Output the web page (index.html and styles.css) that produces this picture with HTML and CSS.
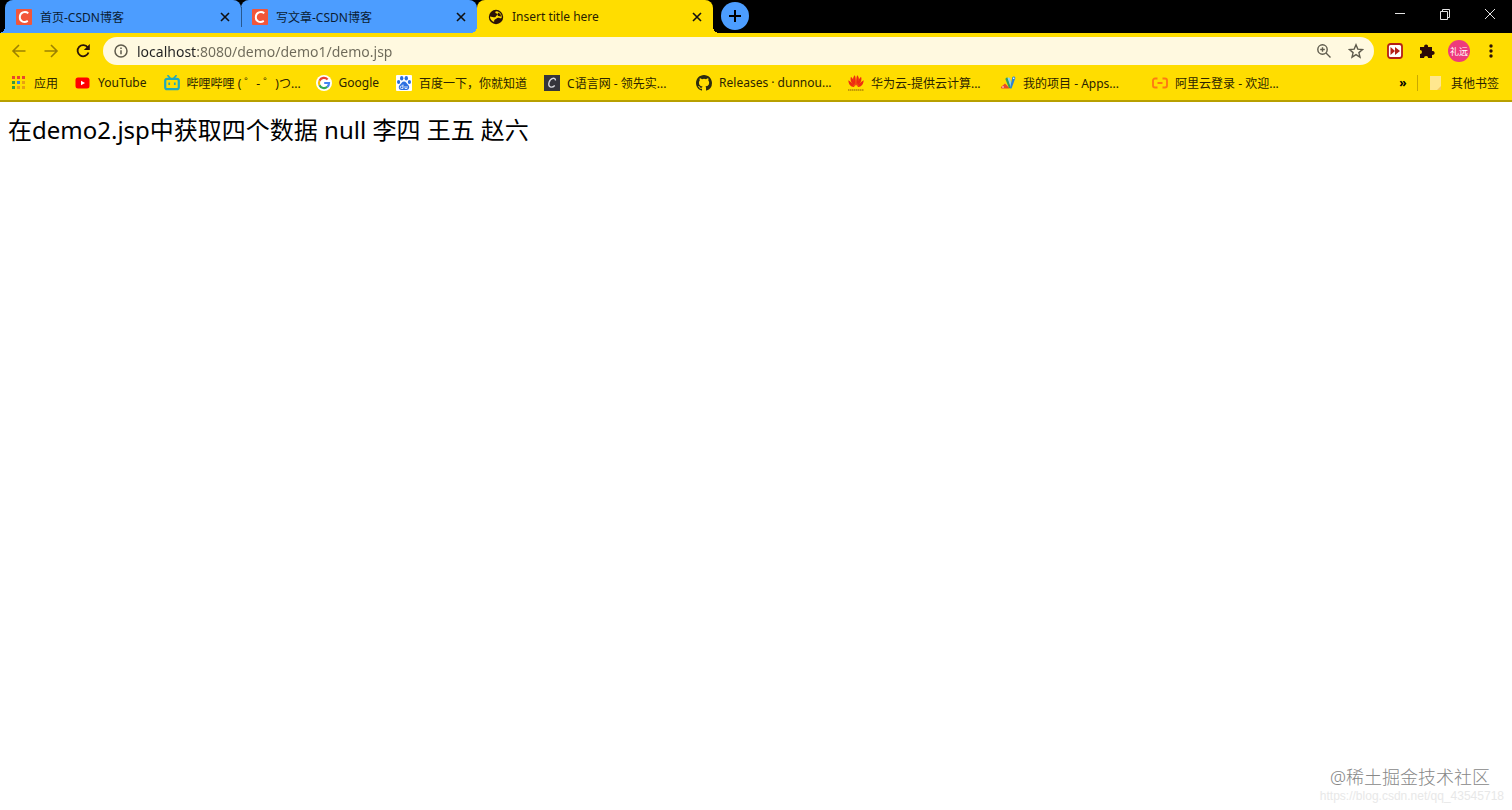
FILE: index.html
```html
<!DOCTYPE html>
<html lang="zh-CN">
<head>
  <meta charset="UTF-8">
  <meta name="viewport" content="width=device-width, initial-scale=1.0">
  <title>Insert title here</title>
  <link rel="stylesheet" href="styles.css">
</head>
<body>
  <header class="browser">
    <div class="tab-strip">
      <div class="tab tab-first">
        <svg class="icon" viewBox="0 0 16 16"><rect width="16" height="16" rx="1" fill="#f2563a"/><path d="M12.300 4.300C9 1.800 4 3.400 3.800 8c-.2 4.800 4.600 6 8 3.900" fill="none" stroke="#fff" stroke-width="1.900"/></svg>
        <span class="tab-title">首页-CSDN博客</span>
        <button class="tab-close" aria-label="关闭"><svg viewBox="0 0 10 10"><path d="M1 1l8 8M9 1L1 9"/></svg></button>
      </div>
      <div class="tab tab-second">
        <svg class="icon" viewBox="0 0 16 16"><rect width="16" height="16" rx="1" fill="#f2563a"/><path d="M12.300 4.300C9 1.800 4 3.400 3.800 8c-.2 4.800 4.600 6 8 3.900" fill="none" stroke="#fff" stroke-width="1.900"/></svg>
        <span class="tab-title">写文章-CSDN博客</span>
        <button class="tab-close" aria-label="关闭"><svg viewBox="0 0 10 10"><path d="M1 1l8 8M9 1L1 9"/></svg></button>
      </div>
      <div class="tab active">
        <svg class="icon" viewBox="0 0 16 16"><circle cx="8" cy="8" r="7.200" fill="#2b1208"/><path d="M8.500 2.300c-2.200.3-1 2.200.4 2.300 1.200 0 1.200 1.300.1 1.700-1.400.5-.7 1.700-1.900 1.900-1.400.2-3.300-.6-5.200-.7.2 2.800 2 4.700 4.200 5.500.1-1.300-.1-2 .8-2.500 1.500-.7 1.900-1.600 3.200-1.800 1.500-.2 1.800 1 3.500.2.600-3-1.500-6.300-5.100-6.600z" fill="#fd0"/><path d="M10 3.500c2 .6 3 2.300 3 4-1 .3-1.800-.8-3.200-.4z" fill="#2b1208"/></svg>
        <span class="tab-title">Insert title here</span>
        <button class="tab-close" aria-label="关闭"><svg viewBox="0 0 10 10"><path d="M1 1l8 8M9 1L1 9"/></svg></button>
      </div>
      <button class="new-tab" aria-label="新标签页"><svg viewBox="0 0 14 14"><path d="M7 1v12M1 7h12"/></svg></button>
      <div class="window-buttons">
        <button aria-label="最小化"><svg viewBox="0 0 12 12"><path d="M1 5.500h10"/></svg></button>
        <button aria-label="还原"><svg viewBox="0 0 12 12"><path d="M1.500 3.500h7v8h-7zM3.500 3.500v-2h7v8h-2"/></svg></button>
        <button aria-label="关闭窗口"><svg viewBox="0 0 12 12"><path d="M1 1l10 10M11 1L1 11"/></svg></button>
      </div>
    </div>

    <div class="toolbar">
      <button class="nav-button faded" aria-label="后退"><svg viewBox="0 0 16 16"><path d="M14.500 8H2M8 2L2 8l6 6"/></svg></button>
      <button class="nav-button faded" aria-label="前进"><svg viewBox="0 0 16 16"><path d="M1.500 8H14M8 2l6 6-6 6"/></svg></button>
      <button class="nav-button reload" aria-label="重新加载"><svg viewBox="0 0 16 16"><path d="M12.800 4.500A5.600 5.600 0 1 0 13.500 9.500"/><path class="fill" d="M14.800 1v6h-6z"/></svg></button>
      <div class="address">
        <svg class="page-info" viewBox="0 0 14 14"><circle cx="7" cy="7" r="6"/><path d="M7 6.200v4M7 3.500v1.500"/></svg>
        <input class="url" type="text" aria-label="地址栏" value="localhost:8080/demo/demo1/demo.jsp">
        <button class="address-button" aria-label="缩放"><svg viewBox="0 0 16 16"><circle cx="6.500" cy="6.500" r="4.700"/><path d="M10 10l4.500 4.500M4.200 6.500h4.600M6.500 4.200v4.600"/></svg></button>
        <button class="address-button" aria-label="收藏"><svg viewBox="0 0 16 16"><path d="M8 1.800l1.800 4.300 4.700.4-3.600 3.100 1.100 4.600L8 11.700l-4 2.500 1.100-4.600-3.600-3.100 4.700-.4z"/></svg></button>
      </div>
      <div class="extensions">
        <button aria-label="快进扩展"><svg viewBox="0 0 16 16"><rect x="1" y="1" width="14" height="14" rx="2.500" fill="#fff" stroke="#b51f16" stroke-width="1.800"/><path d="M3.500 4L8 8l-4.500 4zM8 4l5 4-5 4z" fill="#b51f16"/></svg></button>
        <button aria-label="扩展程序"><svg viewBox="0 0 16 16"><path d="M1 4h4.200a2 2 0 1 1 3.800 0H13v4a2 2 0 1 1 0 3.800V15H9.200a2.100 2.100 0 0 0-4.200 0H1v-4a2 2 0 0 0 0-4z" fill="#2b0a08"/></svg></button>
        <button class="avatar" aria-label="礼远">礼远</button>
        <button aria-label="菜单"><svg viewBox="0 0 16 16"><g fill="#2b1208"><circle cx="8" cy="3" r="1.700"/><circle cx="8" cy="8" r="1.700"/><circle cx="8" cy="13" r="1.700"/></g></svg></button>
      </div>
    </div>

    <nav class="bookmarks">
      <a class="bookmark" href="#">
        <svg class="icon" viewBox="0 0 16 16"><path d="M1 1h3v3H1zM6 1h3v3H6zM11 1h3v3h-3z" fill="#e8472b"/><path d="M1 6h3v3H1zM1 11h3v3H1z" fill="#3b9a3e"/><path d="M6 6h3v3H6z" fill="#3b86d6"/><path d="M11 6h3v3h-3zM6 11h3v3H6zM11 11h3v3h-3z" fill="#e8a011"/></svg>
        <span>应用</span>
      </a>
      <a class="bookmark" href="#">
        <svg class="icon" viewBox="0 0 16 16"><rect x=".5" y="2.500" width="14" height="11" rx="2.500" fill="#f00"/><path d="M6 5.700v4.600L10 8z" fill="#fff"/></svg>
        <span>YouTube</span>
      </a>
      <a class="bookmark wide" href="#">
        <svg class="icon" viewBox="0 0 16 16"><path d="M4 .7l2 2.300M12 .7L10 3" stroke="#20a9bd" stroke-width="1.700" stroke-linecap="round"/><rect x="1.200" y="3.800" width="13.600" height="10.400" rx="2" fill="#fd0" stroke="#20a9bd" stroke-width="2.200"/><path d="M5.200 7.500v2.500M10.800 7.500v2.500" stroke="#20a9bd" stroke-width="1.700"/></svg>
        <span>哔哩哔哩 ( ゜- ゜)つ...</span>
      </a>
      <a class="bookmark" href="#">
        <svg class="icon" viewBox="0 0 16 16"><circle cx="8" cy="8" r="8" fill="#fff"/><g fill="none" stroke-width="2.200"><path d="M11.600 4.400A5 5 0 0 0 3.500 5.700" stroke="#ea4335"/><path d="M3.500 5.700a5 5 0 0 0 0 4.600" stroke="#fbbc05"/><path d="M3.500 10.300a5 5 0 0 0 7.800 1.500" stroke="#34a853"/><path d="M11.300 11.800A5 5 0 0 0 13 8H8.200" stroke="#4285f4"/></g></svg>
        <span>Google</span>
      </a>
      <a class="bookmark" href="#">
        <svg class="icon" viewBox="0 0 16 16"><rect width="16" height="16" rx="1" fill="#fff"/><g fill="#2b6fe0"><ellipse cx="5.700" cy="3.200" rx="1.700" ry="2.200"/><ellipse cx="10.300" cy="3.200" rx="1.700" ry="2.200"/><ellipse cx="2.600" cy="7" rx="1.600" ry="2.100"/><ellipse cx="13.400" cy="7" rx="1.600" ry="2.100"/><path d="M8 6.500c2 0 2.800 2.200 4.300 3.600 1.700 1.700.9 4.900-1.600 4.900H5.300c-2.500 0-3.300-3.200-1.600-4.900C5.200 8.700 6 6.500 8 6.500z"/></g><path d="M7 9.500v4H5.500a1.200 1.200 0 0 1 0-2.500H7M9 11v2.500h2V11" fill="none" stroke="#fff" stroke-width=".8"/></svg>
        <span>百度一下，你就知道</span>
      </a>
      <a class="bookmark wide" href="#">
        <svg class="icon" viewBox="0 0 16 16"><rect width="16" height="16" fill="#35353b"/><path d="M11.500 5.500C11.500 2 6.500 2.500 5 7.500c-1.300 4.800 2.800 6 5.800 3" fill="none" stroke="#d8d8dc" stroke-width="1.300"/></svg>
        <span>C语言网 - 领先实...</span>
      </a>
      <a class="bookmark wide" href="#">
        <svg class="icon" viewBox="0 0 16 16"><path fill="#2b2b10" d="M8 0C3.580 0 0 3.580 0 8c0 3.540 2.290 6.530 5.470 7.590.4.070.55-.17.55-.38v-1.490c-2.010.37-2.530-.49-2.690-.94-.09-.23-.48-.94-.82-1.130-.28-.15-.68-.52-.01-.53.63-.01 1.080.58 1.230.82.72 1.210 1.870.87 2.330.66.07-.52.28-.87.51-1.070-1.780-.2-3.640-.89-3.640-3.950 0-.87.310-1.590.82-2.150-.08-.2-.36-1.020.08-2.120 0 0 .67-.21 2.200.82a7.600 7.600 0 0 1 4 0c1.530-1.040 2.200-.82 2.200-.82.44 1.100.16 1.920.08 2.120.51.56.82 1.270.82 2.150 0 3.070-1.870 3.750-3.650 3.950.29.25.54.73.54 1.480v2.200c0 .21.150.46.55.38A8.010 8.010 0 0 0 16 8c0-4.420-3.580-8-8-8z"/></svg>
        <span>Releases · dunnou...</span>
      </a>
      <a class="bookmark wide" href="#">
        <svg class="icon" viewBox="0 0 16 16"><g fill="#ee2c12"><path d="M7.700 10.800C4.600 7.500 4.200 2 6.900.2 7.900 3 8 7.500 7.700 10.800zM8.300 10.800C11.400 7.500 11.800 2 9.100.2 8.100 3 8 7.500 8.300 10.800z"/><path d="M7 11.200C3.900 9.500 1.500 5 3 1.800 5.500 4 6.800 8 7 11.200zM9 11.200c3.100-1.700 5.500-6.200 4-9.400C10.500 4 9.200 8 9 11.200z"/><path d="M6.500 11.900C3 12.400.2 9 .4 5.200 3.500 7 5.500 9 6.500 11.900zM9.500 11.900c3.500.5 6.300-2.900 6.100-6.700C12.500 7 10.500 9 9.500 11.900z"/></g><path d="M0 15h16" stroke="#8b5a0a" stroke-width="1.200" stroke-dasharray="1.500 .5"/></svg>
        <span>华为云-提供云计算...</span>
      </a>
      <a class="bookmark wide" href="#">
        <svg class="icon" viewBox="0 0 16 16"><path d="M1 12l4-3.500 5 5H1.500A1.200 1.200 0 0 1 1 12z" fill="#e84b29"/><path d="M5.500 4.500a1.500 1.500 0 0 1 2.700-1.200L11 13H9z" fill="#2fa15b"/><path d="M7.500 3a1.500 1.500 0 0 1 2.500.2L11.500 9l-.5 4z" fill="#8fd0ee"/><path d="M12.300 2.500a1.500 1.500 0 0 1 2.900 1L11.500 13.500H10z" fill="#2d82d2"/><circle cx="3" cy="12" r=".8" fill="#fff"/><circle cx="13.700" cy="3.200" r=".8" fill="#fff"/></svg>
        <span>我的项目 - Apps...</span>
      </a>
      <a class="bookmark wide" href="#">
        <svg class="icon" viewBox="0 0 16 16"><path d="M5.500 3.500H3A2 2 0 0 0 1 5.500v5a2 2 0 0 0 2 2h2.500M10.500 3.500H13a2 2 0 0 1 2 2v5a2 2 0 0 1-2 2h-2.500M5.500 8h5" fill="none" stroke="#ff7a12" stroke-width="1.900"/></svg>
        <span>阿里云登录 - 欢迎...</span>
      </a>
      <div class="bookmarks-end">
        <button class="more" aria-label="更多书签">»</button>
        <a class="bookmark" href="#">
          <svg class="icon" viewBox="0 0 16 16"><path d="M2 1h11v14H2z" fill="#ffe78f"/><path d="M13 11v4H9z" fill="#f5c95a"/></svg>
          <span>其他书签</span>
        </a>
      </div>
    </nav>
  </header>

  <main class="page">在demo2.jsp中获取四个数据 null 李四 王五 赵六</main>

  <div class="watermark">
    <span class="community">@稀土掘金技术社区</span>
    <span class="source">https://blog.csdn.net/qq_43545718</span>
  </div>
</body>
</html>
```
FILE: styles.css
```css
* {
  box-sizing: border-box;
}

body {
  margin: 0;
  min-height: 100vh;
  background: #fff;
  color: #000;
  font-family: "Noto Sans", "Noto Sans CJK SC", sans-serif;
  font-size: 12px;
}

button {
  display: flex;
  align-items: center;
  justify-content: center;
  padding: 0;
  border: none;
  background: none;
  color: inherit;
  font-family: inherit;
  cursor: pointer;
}

svg {
  flex: none;
  fill: none;
}

.icon {
  width: 16px;
  height: 16px;
}

.browser {
  background: #fd0;
  border-bottom: 2px solid #b8a000;
}

/* tabs */
.tab-strip {
  display: flex;
  height: 33px;
  padding-left: 5px;
  background: #000;
}

.tab {
  position: relative;
  display: flex;
  align-items: center;
  gap: 8px;
  width: 236px;
  padding: 0 10px 0 11px;
  border-radius: 8px 8px 0 0;
  background: #4c9dff;
  color: #0a1c33;
}

.tab-second {
  background: linear-gradient(#27588f, #27588f) 0 50% / 1px 20px no-repeat, #4c9dff;
}

.tab.active {
  background: #fd0;
  color: #2b1f00;
}

/* curved feet at the bottom of the tabs */
.tab-first::before,
.active::before,
.active::after {
  content: "";
  position: absolute;
  bottom: 0;
  width: 6px;
  height: 6px;
}

.tab-first::before {
  right: 100%;
  background: radial-gradient(circle at 0 0, transparent 6px, #4c9dff 6px);
}

.active::before {
  right: 100%;
  background: radial-gradient(circle at 0 0, transparent 6px, #fd0 6px);
}

.active::after {
  left: 100%;
  background: radial-gradient(circle at 100% 0, transparent 6px, #fd0 6px);
}

.tab-title {
  flex: 1;
  white-space: nowrap;
}

.tab-close {
  width: 12px;
  height: 16px;
}

.tab-close svg {
  width: 10px;
  height: 10px;
  stroke: #111;
  stroke-width: 1.6;
}

.new-tab {
  width: 28px;
  height: 28px;
  margin: 2px 8px;
  border-radius: 50%;
  background: #4c9dff;
}

.new-tab svg {
  width: 14px;
  height: 14px;
  stroke: #000;
  stroke-width: 2;
}

.window-buttons {
  display: flex;
  height: 28px;
  margin-left: auto;
}

.window-buttons button {
  width: 45px;
}

.window-buttons svg {
  width: 12px;
  height: 12px;
  stroke: #e4e4e4;
  stroke-width: 1;
}

/* toolbar */
.toolbar {
  display: flex;
  align-items: center;
  height: 36px;
  padding: 0 5px 0 3px;
}

.nav-button {
  width: 32px;
  height: 28px;
}

.nav-button svg {
  width: 16px;
  height: 16px;
  stroke: #2b1208;
  stroke-width: 1.8;
}

.faded svg {
  stroke: #9c8100;
  stroke-width: 1.6;
}

.nav-button .fill {
  fill: #2b1208;
  stroke: none;
}

.address {
  display: flex;
  flex: 1;
  align-items: center;
  height: 28px;
  margin: 0 5px 0 4px;
  padding: 0 2px 0 11px;
  border-radius: 14px;
  background: #fff9e0;
}

.page-info {
  width: 14px;
  height: 14px;
  stroke: #5f5b4c;
  stroke-width: 1.5;
}

.url {
  flex: 1;
  min-width: 0;
  height: 28px;
  margin-left: 9px;
  padding: 0;
  border: none;
  outline: none;
  /* the host part is darker than the path */
  background: linear-gradient(90deg, #222 60px, #6d6959 60px);
  -webkit-background-clip: text;
  background-clip: text;
  -webkit-text-fill-color: transparent;
  font-family: inherit;
  font-size: 14px;
}

.address-button {
  width: 32px;
  height: 28px;
}

.address-button svg {
  width: 16px;
  height: 16px;
  stroke: #5f5b4c;
  stroke-width: 1.4;
}

.extensions {
  display: flex;
  align-items: center;
}

.extensions button {
  width: 32px;
  height: 28px;
}

.extensions svg {
  width: 16px;
  height: 16px;
}

.extensions .avatar {
  width: 22px;
  height: 22px;
  margin: 0 5px;
  border-radius: 50%;
  background: #ee3a7c;
  color: #fff;
  font-size: 9px;
}

/* bookmarks */
.bookmarks {
  display: flex;
  align-items: center;
  gap: 17px;
  height: 31px;
  padding: 0 13px 4px 11px;
}

.bookmark {
  display: flex;
  align-items: center;
  gap: 7px;
  color: #2b2400;
  text-decoration: none;
  white-space: nowrap;
}

.wide {
  width: 135px;
}

.bookmarks-end {
  display: flex;
  align-items: center;
  margin-left: auto;
}

.bookmarks-end .bookmark {
  height: 16px;
  padding-left: 10px;
  border-left: 1px solid #c9a800;
}

.more {
  width: 28px;
  height: 20px;
  font-size: 12px;
  font-weight: bold;
}

/* page */
.page {
  padding: 10px 8px;
  font-size: 24px;
  line-height: 36px;
}

.watermark {
  position: absolute;
  right: 8px;
  bottom: 6px;
  display: flex;
  flex-direction: column;
  align-items: flex-end;
}

.community {
  padding-right: 14px;
  color: #888;
  font-size: 18px;
  font-weight: 300;
  line-height: 22px;
}

.source {
  color: #e8e8e8;
  font-family: "Liberation Sans", sans-serif;
  font-size: 12px;
  line-height: 16px;
}
```
